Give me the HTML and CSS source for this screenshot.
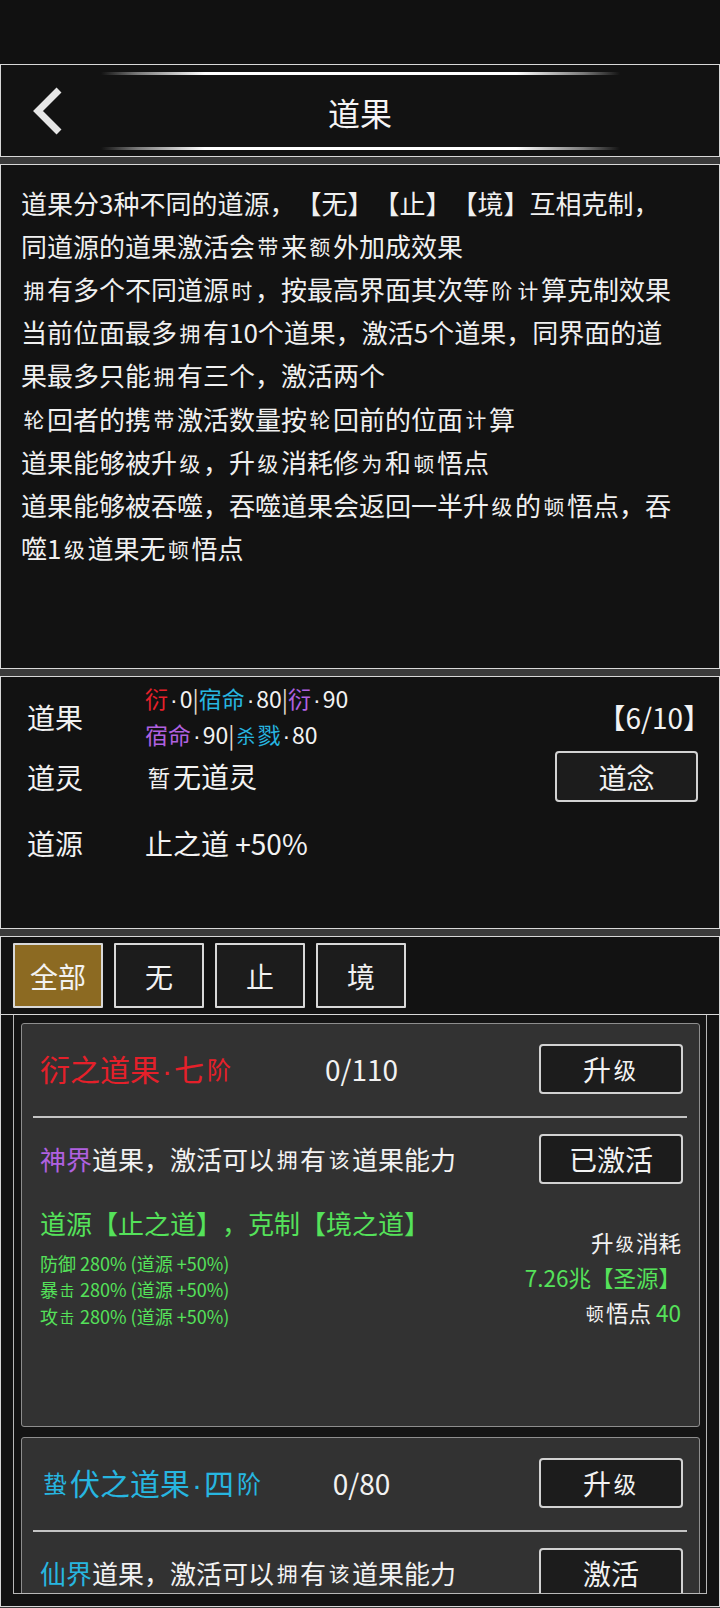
FILE: index.html
```html
<!DOCTYPE html>
<html lang="zh-CN">
<head>
<meta charset="utf-8">
<title>道果</title>
<link rel="stylesheet" href="styles.css">
</head>
<body>
<div class="status"></div>

<header class="panel topbar">
  <div class="glow"></div>
  <div class="bar-row">
    <div class="back">
      <svg width="40" height="56" viewBox="0 0 40 56"><polyline points="35,7 14,28 35,49" fill="none" stroke="#e6e6e6" stroke-width="7" stroke-linecap="butt" stroke-linejoin="miter"/></svg>
    </div>
    <h1 class="title">道果</h1>
    <div></div>
  </div>
  <div class="glow"></div>
</header>

<section class="panel desc">
  <p>道果分3种不同的道源，【无】【止】【境】互相克制，<br>同道源的道果激活会<i class="f">带</i>来<i class="f">额</i>外加成效果</p>
  <p><i class="f">拥</i>有多个不同道源<i class="f">时</i>，按最高界面其次等<i class="f">阶</i><i class="f">计</i>算克制效果</p>
  <p>当前位面最多<i class="f">拥</i>有10个道果，激活5个道果，同界面的道<br>果最多只能<i class="f">拥</i>有三个，激活两个</p>
  <p><i class="f">轮</i>回者的携<i class="f">带</i>激活数量按<i class="f">轮</i>回前的位面<i class="f">计</i>算</p>
  <p>道果能够被升<i class="f">级</i>，升<i class="f">级</i>消耗修<i class="f">为</i>和<i class="f">顿</i>悟点</p>
  <p>道果能够被吞噬，吞噬道果会返回一半升<i class="f">级</i>的<i class="f">顿</i>悟点，吞<br>噬1<i class="f">级</i>道果无<i class="f">顿</i>悟点</p>
</section>

<section class="panel info">
  <div class="lbl">道果</div>
  <div class="val multi">
    <div><span class="red">衍</span><b class="dot">·</b>0<span class="sep">|</span><span class="cyan">宿命</span><b class="dot">·</b>80<span class="sep">|</span><span class="purple">衍</span><b class="dot">·</b>90</div>
    <div><span class="purple">宿命</span><b class="dot">·</b>90<span class="sep">|</span><span class="cyan"><i class="f">杀</i>戮</span><b class="dot">·</b>80</div>
  </div>
  <div class="count">【6/10】</div>

  <div class="lbl">道灵</div>
  <div class="val"><i class="f">暂</i>无道灵</div>
  <div class="btn">道念</div>

  <div class="lbl">道源</div>
  <div class="val">止之道 +50%</div>
  <div></div>
</section>

<section class="panel market">
  <nav class="tabs">
    <div class="tab active">全部</div>
    <div class="tab">无</div>
    <div class="tab">止</div>
    <div class="tab">境</div>
  </nav>
  <div class="list">
    <div class="scroll">
      <article class="card">
        <div class="row-head">
          <div class="name red">衍之道果<b class="dot">·</b>七<i class="f">阶</i></div>
          <div class="num">0/110</div>
          <div class="btn right">升<i class="f">级</i></div>
        </div>
        <div class="divider"></div>
        <div class="row-act">
          <div class="realm"><span class="purple">神界</span>道果，激活可以<i class="f">拥</i>有<i class="f">该</i>道果能力</div>
          <div class="btn">已激活</div>
        </div>
        <div class="details">
          <div class="effects">
            <div class="src">道源【止之道】，克制【境之道】</div>
            <div class="stats">
              <div>防御 280% (道源 +50%)</div>
              <div>暴<i class="f">击</i> 280% (道源 +50%)</div>
              <div>攻<i class="f">击</i> 280% (道源 +50%)</div>
            </div>
          </div>
          <div class="cost">
            <div>升<i class="f">级</i>消耗</div>
            <div class="green">7.26兆【圣源】</div>
            <div><i class="f">顿</i>悟点 <span class="green">40</span></div>
          </div>
        </div>
      </article>

      <article class="card">
        <div class="row-head">
          <div class="name cyan"><i class="f">蛰</i>伏之道果<b class="dot">·</b>四<i class="f">阶</i></div>
          <div class="num">0/80</div>
          <div class="btn right">升<i class="f">级</i></div>
        </div>
        <div class="divider"></div>
        <div class="row-act">
          <div class="realm"><span class="cyan">仙界</span>道果，激活可以<i class="f">拥</i>有<i class="f">该</i>道果能力</div>
          <div class="btn">激活</div>
        </div>
      </article>
    </div>
  </div>
</section>
</body>
</html>
```

FILE: styles.css
```css
html, body {
  margin: 0;
  padding: 0;
}
body {
  width: 720px;
  background: #3a3a3a;
  color: #f2f2f2;
  font-family: "Noto Sans CJK SC", "Noto Sans", sans-serif;
  text-spacing-trim: space-all;
}
p, h1 {
  margin: 0;
}
.f {
  font-style: normal;
  font-size: 0.8em;
  padding: 0 0.125em;
  vertical-align: 0.06em;
}
.dot {
  font-weight: 400;
  font-family: "Liberation Sans", sans-serif;
  color: inherit;
  padding: 0 2px;
}
.val.multi .dot {
  color: #f2f2f2;
}
.red { color: #e5202a; }
.cyan { color: #27b6e0; }
.purple { color: #b061e0; }
.green { color: #55e25a; }

.status {
  height: 64px;
  background: #111111;
}
.panel {
  box-sizing: border-box;
  background: #121212;
  border: 1px solid #d8d8d8;
}
.panel + .panel {
  margin-top: 7px;
}

/* header */
.topbar {
  height: 93px;
  padding-top: 7px;
}
.glow {
  width: 519px;
  height: 3px;
  margin: 0 auto;
  background: linear-gradient(90deg, rgba(255,255,255,0) 0%, rgba(190,190,190,0.6) 7%, #ffffff 20%, #ffffff 80%, rgba(190,190,190,0.6) 93%, rgba(255,255,255,0) 100%);
}
.bar-row {
  height: 72px;
  display: grid;
  grid-template-columns: 1fr auto 1fr;
  align-items: center;
}
.back {
  padding-left: 23px;
  height: 56px;
}
.back svg {
  display: block;
}
.title {
  font-size: 32px;
  font-weight: 400;
  line-height: 40px;
  color: #f5f5f5;
  padding-top: 2px;
}

/* description */
.desc {
  height: 505px;
  padding: 17px 0 0 20px;
  font-size: 26px;
  line-height: 42.5px;
  white-space: nowrap;
  color: #f0f0f0;
}

/* info */
.info {
  height: 253px;
  padding: 6px 21px 0 26px;
  display: grid;
  grid-template-columns: 118px 1fr auto;
  grid-template-rows: 68px 51px 82px;
  align-items: center;
  font-size: 28px;
}
.lbl, .val {
  line-height: 40px;
  white-space: nowrap;
}
.val.multi {
  font-size: 23px;
  line-height: 34px;
}
.sep {
  color: #e2ddcc;
}
.count {
  justify-self: end;
  margin-right: -13px;
  line-height: 40px;
}
.info .btn {
  width: 143px;
  height: 51px;
}

/* buttons */
.btn {
  box-sizing: border-box;
  width: 144px;
  height: 50px;
  border: 2px solid #d2d2d2;
  border-radius: 4px;
  background: #1c1c1c;
  color: #f2f2f2;
  font-size: 28px;
  display: flex;
  align-items: center;
  justify-content: center;
  white-space: nowrap;
}

/* market */
.tabs {
  display: flex;
  gap: 11px;
  padding: 6px 12px 6px;
}
.tab {
  box-sizing: border-box;
  width: 90px;
  height: 65px;
  border: 2px solid #d8d8d8;
  border-radius: 1px;
  background: #1c1c1c;
  font-size: 28px;
  display: flex;
  align-items: center;
  justify-content: center;
}
.tab.active {
  background: #8c6a22;
}
.list {
  border-top: 1px solid #d8d8d8;
  padding: 0 12px 12px;
}
.scroll {
  box-sizing: border-box;
  height: 579px;
  border: 1px solid #b8b8b8;
  border-top: none;
  overflow: hidden;
  padding: 8px 6px 0 7px;
  background: #141414;
}
.card {
  box-sizing: border-box;
  height: 404px;
  border: 1px solid #8e8e8e;
  border-radius: 3px;
  background: #323232;
}
.card + .card {
  margin-top: 10px;
}
.row-head {
  display: grid;
  grid-template-columns: 1fr auto 1fr;
  align-items: center;
  padding: 20px 16px 0 18px;
}
.name {
  font-size: 30px;
  line-height: 40px;
  white-space: nowrap;
}
.num {
  font-size: 28px;
  line-height: 40px;
}
.btn.right {
  justify-self: end;
}
.divider {
  height: 2px;
  background: #c4c4c4;
  margin: 22px 12px 0 11px;
}
.row-act {
  display: flex;
  justify-content: space-between;
  align-items: center;
  padding: 16px 16px 0 18px;
}
.realm {
  font-size: 26px;
  line-height: 40px;
  white-space: nowrap;
}
.details {
  display: flex;
  justify-content: space-between;
  padding: 19px 18px 0 18px;
}
.src {
  font-size: 26px;
  line-height: 40px;
  color: #55e25a;
  white-space: nowrap;
}
.stats {
  margin-top: 7px;
  font-size: 18px;
  line-height: 26px;
  color: #55e25a;
  white-space: nowrap;
}
.cost {
  padding-top: 22px;
  text-align: right;
  font-size: 22.5px;
  line-height: 34.5px;
  white-space: nowrap;
}
```
